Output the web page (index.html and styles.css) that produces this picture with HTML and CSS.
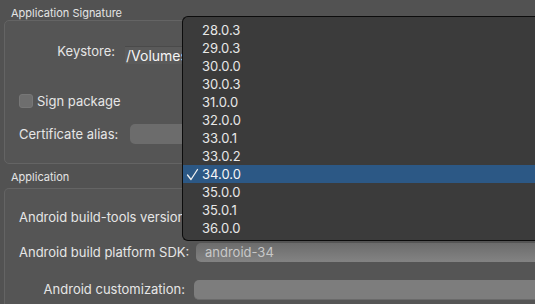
FILE: index.html
```html
<!DOCTYPE html>
<html>
<head>
<meta charset="utf-8">
<link rel="stylesheet" href="styles.css">
</head>
<body>
<div class="pane">
  <div class="section-title first">Application Signature</div>
  <div class="group group-sign">
    <div class="form form-sign">
      <div class="label keystore-label">Keystore:</div>
      <div class="field keystore-field">/Volumes/</div>
      <div class="check-row">
        <span class="checkbox"></span>
        <span class="check-label">Sign package</span>
      </div>
      <div class="label cert-label">Certificate alias:</div>
      <div class="field cert-field"></div>
    </div>
  </div>
  <div class="section-title">Application</div>
  <div class="group group-app">
    <div class="form form-app">
      <div class="label">Android build-tools version:</div>
      <div class="field popup-field"></div>
      <div class="label">Android build platform SDK:</div>
      <div class="field sdk-field">android-34</div>
      <div class="label">Android customization:</div>
      <div class="field custom-field"></div>
    </div>
  </div>
</div>

<div class="menu">
  <div class="item">28.0.3</div>
  <div class="item">29.0.3</div>
  <div class="item">30.0.0</div>
  <div class="item">30.0.3</div>
  <div class="item">31.0.0</div>
  <div class="item">32.0.0</div>
  <div class="item">33.0.1</div>
  <div class="item">33.0.2</div>
  <div class="item selected"><svg class="check" width="13" height="13" viewBox="0 0 13 13"><polyline points="1.5,7 5,11.5 11.5,1.5" fill="none" stroke="#f2f2f2" stroke-width="1.3" stroke-linecap="round" stroke-linejoin="round"/></svg>34.0.0</div>
  <div class="item">35.0.0</div>
  <div class="item">35.0.1</div>
  <div class="item">36.0.0</div>
</div>
</body>
</html>
```

FILE: styles.css
```css
html, body {
  margin: 0;
  padding: 0;
  width: 535px;
  height: 304px;
  overflow: hidden;
  background: #525252;
  font-family: Inter, "Liberation Sans", sans-serif;
  color: #e6e6e6;
}

.pane {
  padding: 0 0 0 4px;
  width: 580px;
}

.section-title {
  font-size: 11px;
  line-height: 14px;
  padding-left: 7px;
  height: 14px;
  margin: 0 0 4px 0;
  color: #e4e4e4;
}
.section-title.first {
  padding-top: 6px;
  margin-bottom: 0;
}

.group {
  border: 1px solid #646464;
  border-radius: 5px;
  background: #555555;
  box-sizing: border-box;
}

.group-sign {
  height: 144px;
  margin-bottom: 6px;
}

.group-app {
  height: 121px;
  border-bottom: none;
  border-radius: 5px 5px 0 0;
}

.form {
  display: grid;
  column-gap: 10px;
  align-items: center;
  padding-left: 14px;
  font-size: 13px;
}

.form-sign {
  grid-template-columns: 96px 1fr;
  padding-top: 24px;
}

.form-app {
  grid-template-columns: 166px 1fr;
  padding-top: 19px;
  row-gap: 16px;
}

.label {
  text-align: right;
  white-space: nowrap;
  line-height: 19px;
}

.keystore-label {
  align-self: start;
  line-height: 12px;
}

.field {
  height: 19px;
  box-sizing: border-box;
  border-radius: 5px;
  overflow: hidden;
  white-space: nowrap;
}

.keystore-field {
  border-radius: 0;
  background: #5a5a5a;
  border-top: 1px solid #4a4a4a;
  font-size: 14px;
  line-height: 17px;
  color: #f6f6f6;
  padding-left: 1px;
  height: 18px;
  margin-top: 1px;
}

.check-row {
  grid-column: 1 / 3;
  display: flex;
  align-items: center;
  gap: 4px;
  margin-top: 30px;
  height: 14px;
}

.checkbox {
  width: 14px;
  height: 14px;
  box-sizing: border-box;
  border-radius: 3px;
  background: #6e6e6e;
  border: 1px solid #777;
}

.check-label {
  line-height: 14px;
}

.cert-label {
  margin-top: 16px;
}

.cert-field {
  margin-top: 16px;
  margin-left: 5px;
  height: 20px;
  background: #6c6c6c;
}

.popup-field {
  background: #6e6e6e;
}

.sdk-field {
  background: linear-gradient(#6c6c6c, #838383);
  color: #c8c8c8;
  line-height: 19px;
  padding-left: 9px;
  margin-left: 1px;
}

.custom-field {
  margin-top: 2px;
  height: 20px;
  margin-left: -1px;
  background: #7d7d7d;
  border-bottom: 1px solid #6a6a6a;
}

.menu {
  position: absolute;
  left: 182px;
  top: 16px;
  width: 353px;
  height: 225px;
  box-sizing: border-box;
  background: #3b3b3b;
  border: 1px solid #0c0c0c;
  border-right: none;
  border-radius: 6px 0 0 6px;
  padding-top: 4px;
  font-size: 13px;
  color: #e8e8e8;
}

.item {
  position: relative;
  height: 18px;
  line-height: 18px;
  padding-left: 19px;
}

.item.selected {
  background: #2c5885;
  color: #f6f6f6;
}

.check {
  position: absolute;
  left: 3px;
  top: 3px;
}
```
